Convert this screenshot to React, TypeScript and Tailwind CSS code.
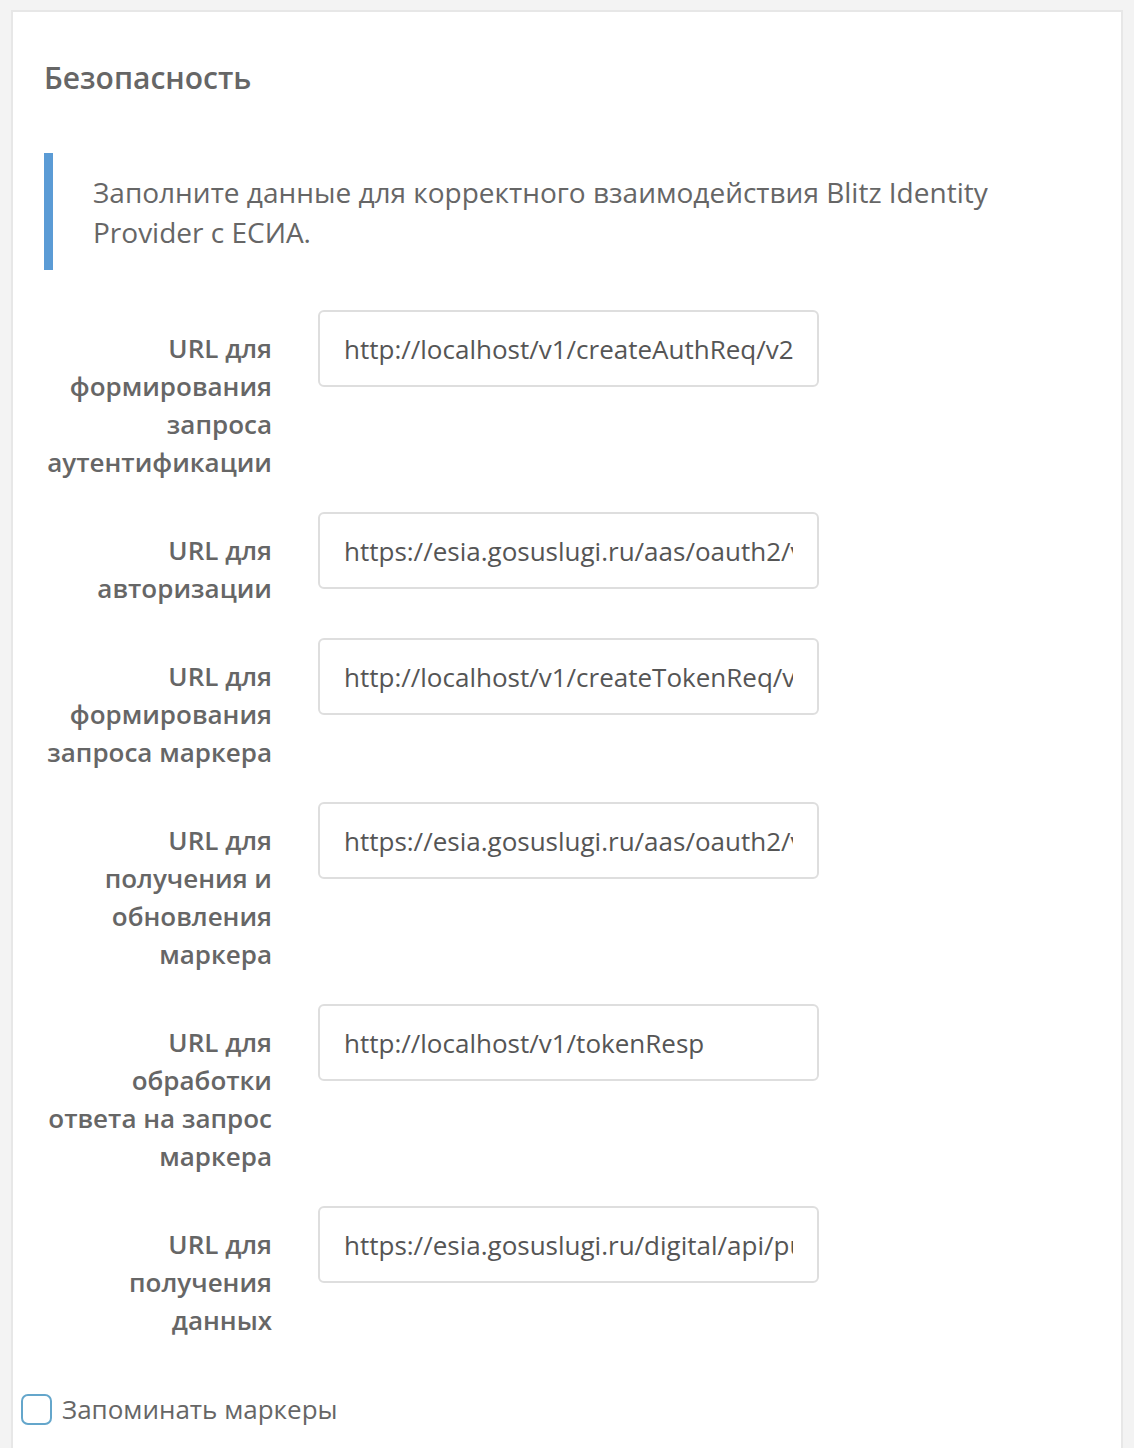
import React from 'react';

const rows = [
  { label: ['URL для', 'формирования', 'запроса', 'аутентификации'], value: 'http://localhost/v1/createAuthReq/v2' },
  { label: ['URL для', 'авторизации'], value: 'https://esia.gosuslugi.ru/aas/oauth2/v2/ac' },
  { label: ['URL для', 'формирования', 'запроса маркера'], value: 'http://localhost/v1/createTokenReq/v2' },
  { label: ['URL для', 'получения и', 'обновления', 'маркера'], value: 'https://esia.gosuslugi.ru/aas/oauth2/v3/te' },
  { label: ['URL для', 'обработки', 'ответа на запрос', 'маркера'], value: 'http://localhost/v1/tokenResp' },
  { label: ['URL для', 'получения', 'данных'], value: 'https://esia.gosuslugi.ru/digital/api/public' },
];

export default function App() {
  return (
    <div className="min-h-[1448px] bg-[#f3f3f3] pl-[11px] pr-[11px] pt-[10px] font-['Open_Sans',sans-serif] text-[#666]">
      <div className="min-h-[1438px] border-l-2 border-r-2 border-t-2 border-[#e7e7e7] bg-white">
        {/* Header */}
        <div className="pl-[31px] pt-[46px]">
          <h2 className="text-[30px] font-semibold leading-[40px] text-[#666]">Безопасность</h2>
        </div>

        {/* Notice */}
        <div className="ml-[31px] mt-[55px] border-l-[9px] border-[#5b9bd5] pl-[40px] pt-[19px] pb-[18px] pr-4">
          <p className="max-w-[960px] text-[28px] leading-[40px] text-[#666]">
            Заполните данные для корректного взаимодействия Blitz Identity Provider с ЕСИА.
          </p>
        </div>

        {/* Fields */}
        <div className="mt-[40px] flex flex-col gap-[31px]">
          {rows.map((r, i) => (
            <div key={i} className="flex items-start">
              <div className="w-[259px] pt-[19px] text-right text-[26px] font-semibold leading-[38px] text-[#666]">
                {r.label.map((l, j) => (
                  <div key={j}>{l}</div>
                ))}
              </div>
              <div className="ml-[46px]">
                <input
                  readOnly
                  value={r.value}
                  className="h-[77px] w-[501px] rounded-[6px] border-2 border-[#dedede] bg-white px-[24px] text-[26px] text-[#555] outline-none"
                />
              </div>
            </div>
          ))}
        </div>

        {/* Checkbox */}
        <label className="mt-[52px] flex items-center gap-[10px] pl-[8px]">
          <span className="h-[31px] w-[31px] rounded-[7px] border-2 border-[#64a6cb] bg-white" />
          <span className="text-[26px] leading-[36px] text-[#666]">Запоминать маркеры</span>
        </label>
      </div>
    </div>
  );
}
